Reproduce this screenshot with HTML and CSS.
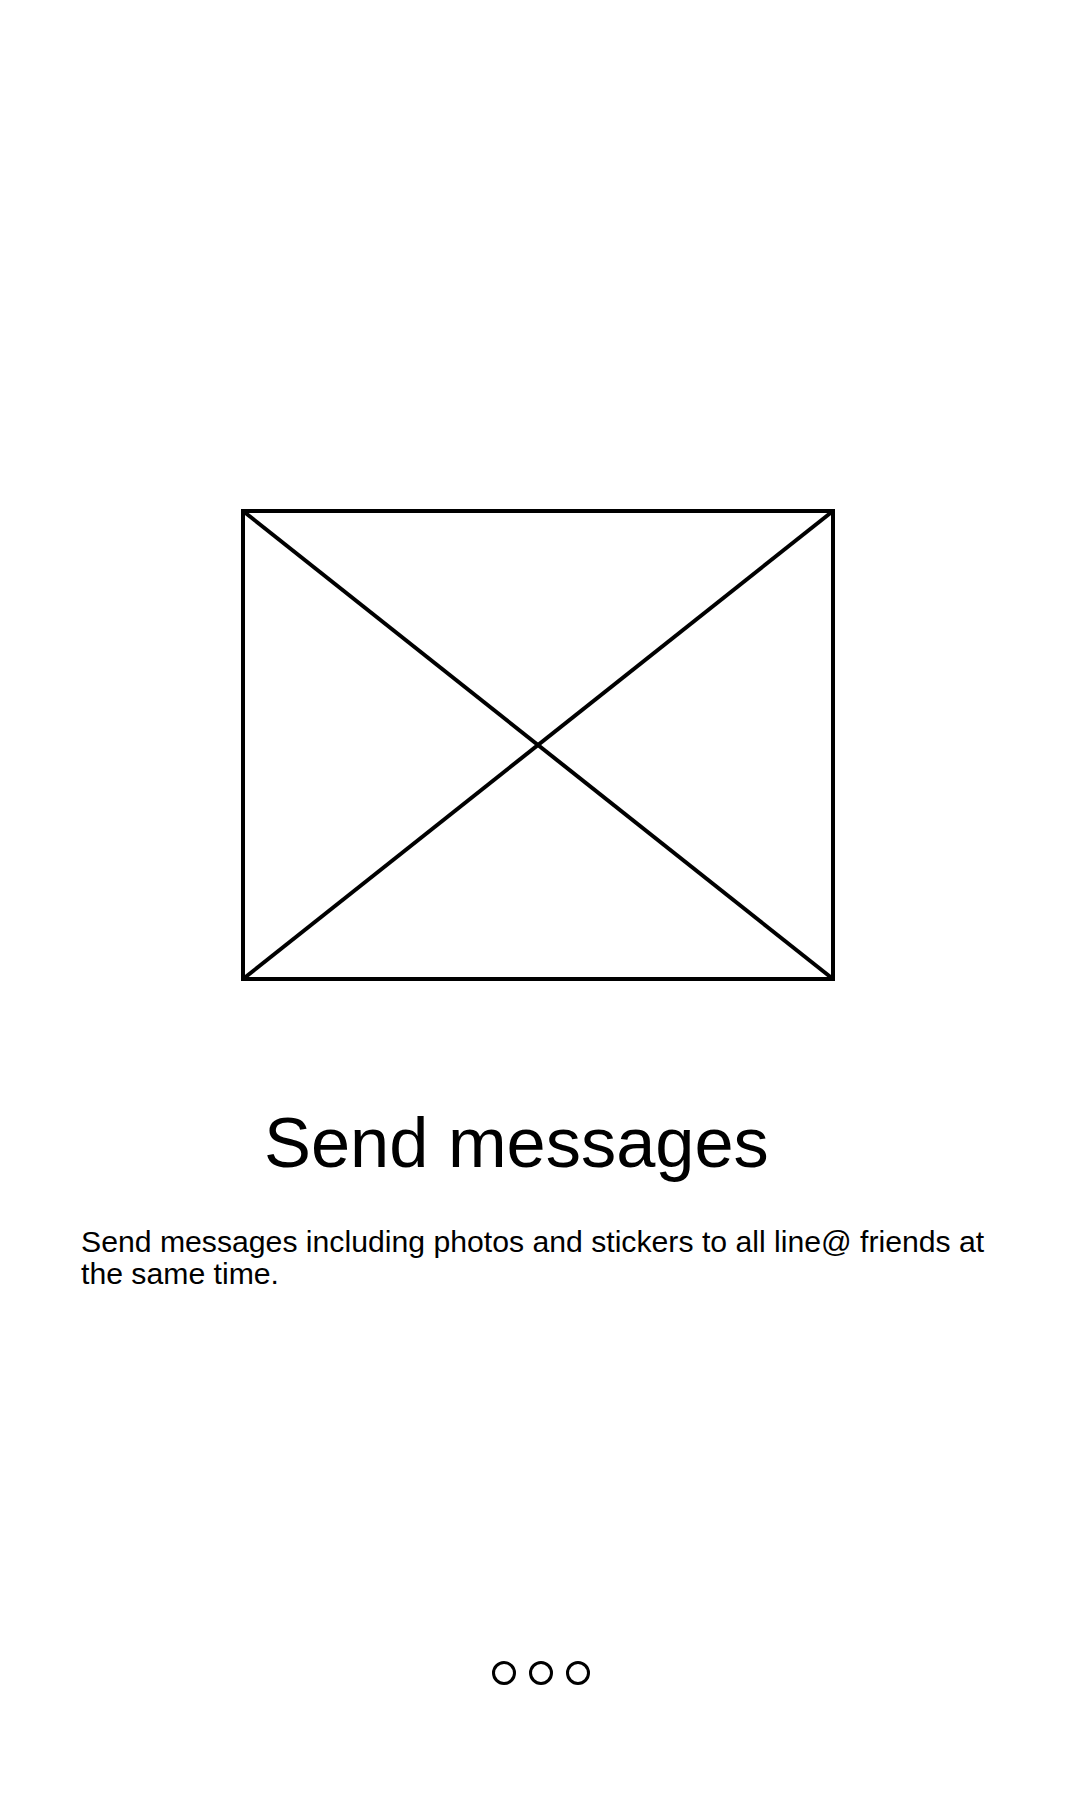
FILE: index.html
```html
<!DOCTYPE html>
<html>
<head>
<meta charset="utf-8">
<link rel="stylesheet" href="styles.css">
</head>
<body>
<main class="screen">
  <div class="figure">
    <svg class="placeholder" width="594" height="472" viewBox="0 0 594 472">
      <rect x="2" y="2" width="590" height="468" fill="none" stroke="#000" stroke-width="4"/>
      <line x1="2" y1="2" x2="592" y2="470" stroke="#000" stroke-width="4"/>
      <line x1="592" y1="2" x2="2" y2="470" stroke="#000" stroke-width="4"/>
    </svg>
  </div>
  <h1 class="title">Send messages</h1>
  <p class="desc">Send messages including photos and stickers to all line@ friends at the same time.</p>
  <div class="dots">
    <span class="dot"></span>
    <span class="dot"></span>
    <span class="dot"></span>
  </div>
</main>
</body>
</html>
```

FILE: styles.css
```css
html, body {
  margin: 0;
  padding: 0;
  background: #fff;
}
body {
  font-family: "Liberation Sans", Arial, sans-serif;
  color: #000;
}
.screen {
  width: 1080px;
  height: 1800px;
  display: flex;
  flex-direction: column;
  align-items: stretch;
}
.figure {
  padding-top: 509px;
  padding-left: 241px;
  height: 472px;
}
.placeholder {
  display: block;
}
.title {
  margin: 0;
  margin-top: 119px;
  padding-left: 264px;
  font-size: 70.4px;
  font-weight: normal;
  line-height: 85px;
}
.desc {
  margin: 0;
  margin-top: 41px;
  padding-left: 81px;
  padding-right: 80px;
  font-size: 30.2px;
  line-height: 32px;
}
.dots {
  margin-top: auto;
  margin-bottom: 115px;
  display: flex;
  justify-content: center;
  gap: 13px;
  padding-left: 2px;
}
.dot {
  width: 18px;
  height: 18px;
  border: 3px solid #000;
  border-radius: 50%;
}
```
